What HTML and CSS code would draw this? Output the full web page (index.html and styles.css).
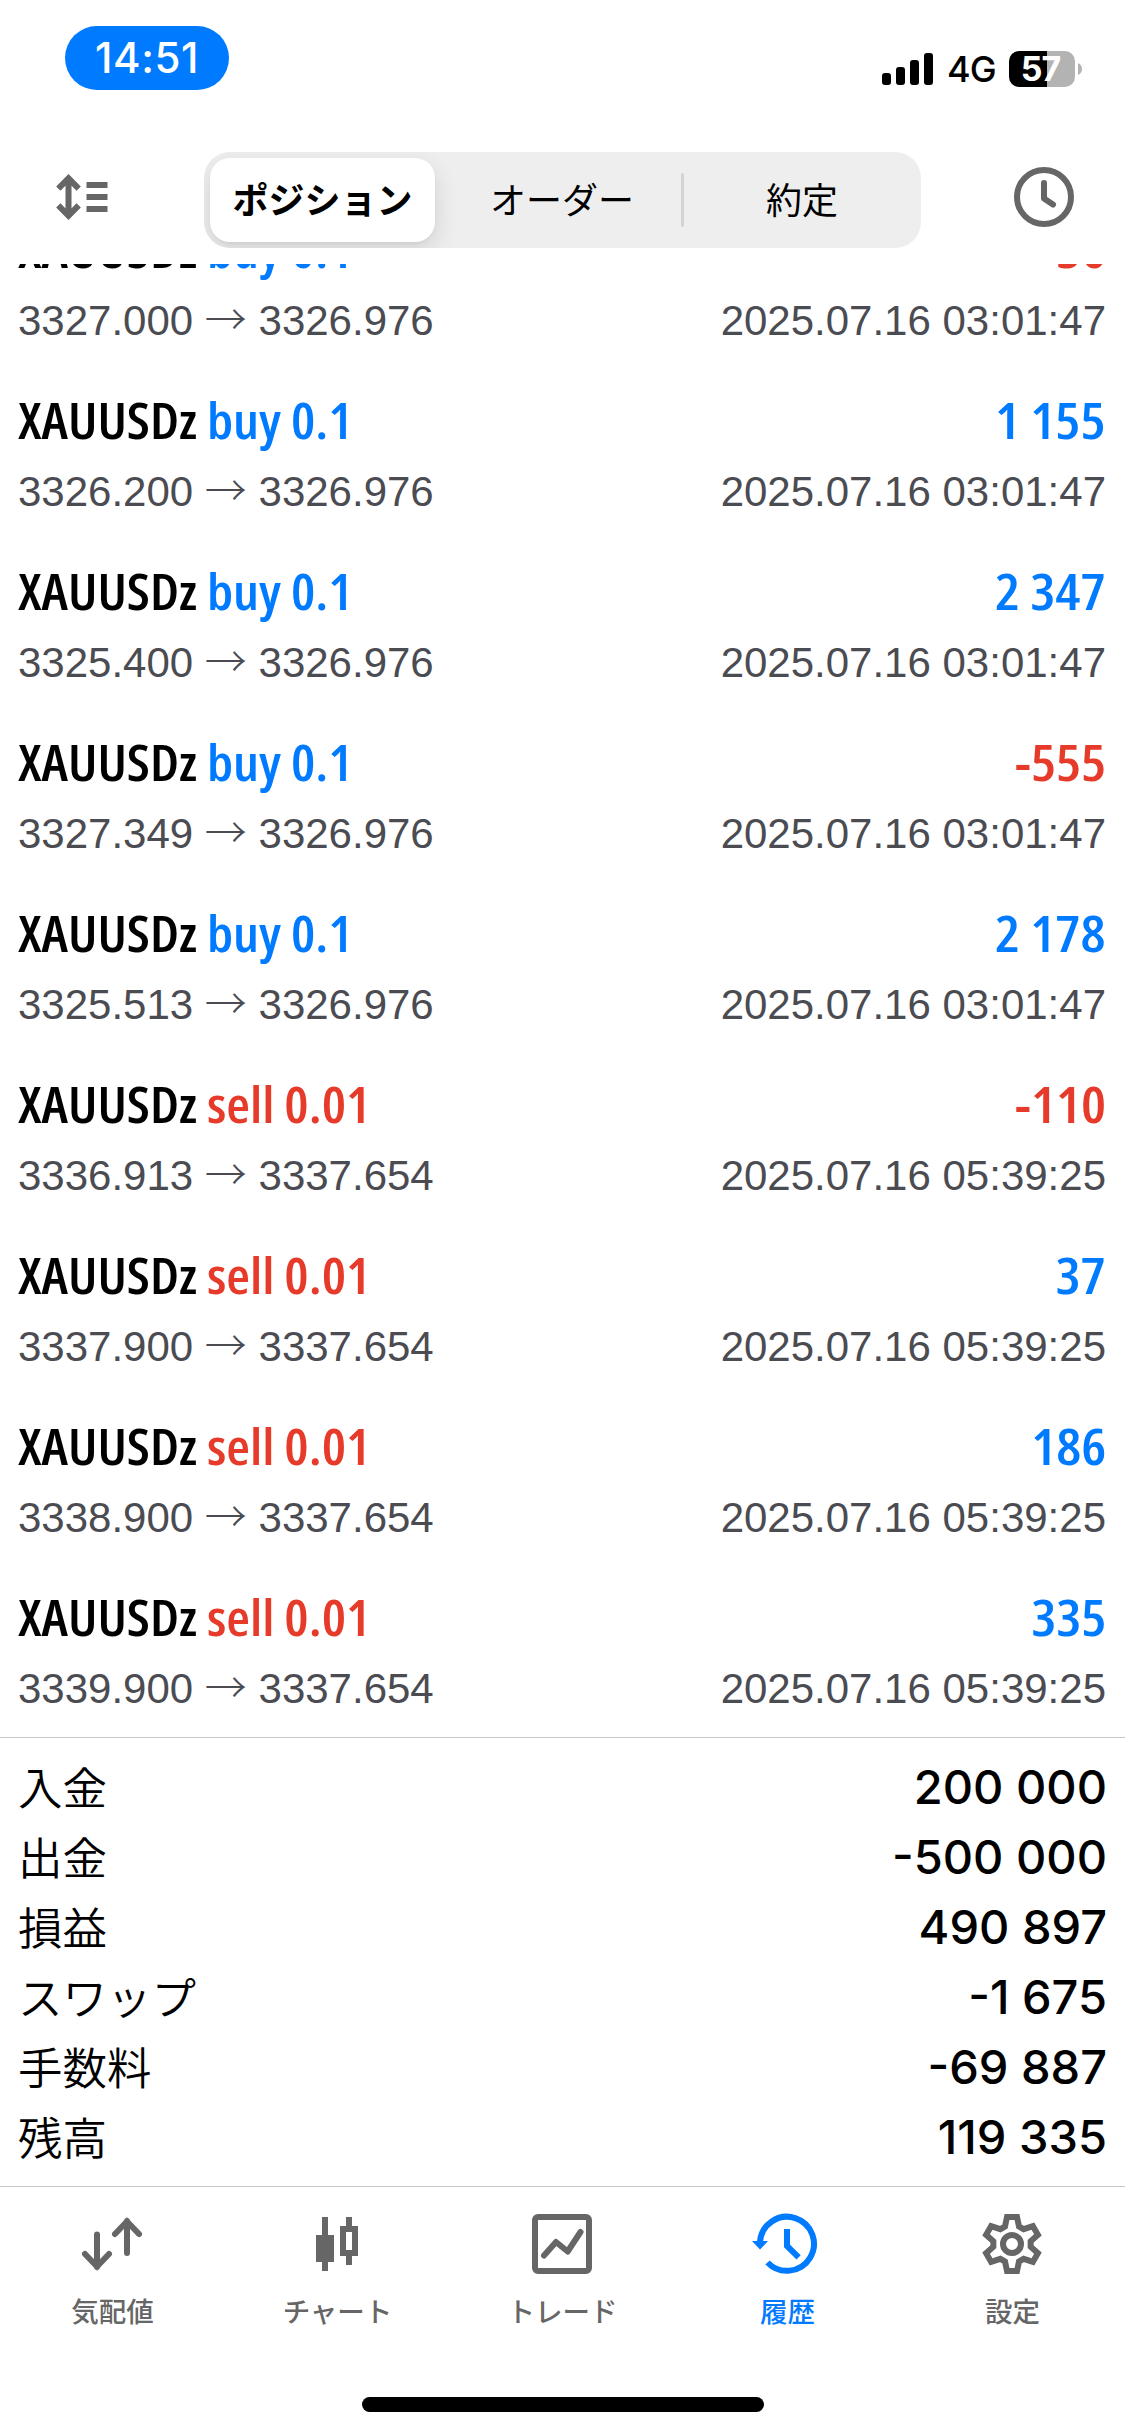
FILE: index.html
```html
<!DOCTYPE html>
<html lang="ja">
<head>
<meta charset="utf-8">
<title>履歴</title>
<link rel="stylesheet" href="styles.css">
</head>
<body>
<div class="screen">
  <div class="status">
    <div class="clock">14:51</div>
    <div class="status-right">
      <svg class="signal" width="51" height="34" viewBox="0 0 51 34"><rect x="0" y="21" width="9" height="12" rx="3"/><rect x="14" y="15" width="9" height="18" rx="3"/><rect x="28" y="8" width="9" height="25" rx="3"/><rect x="42" y="1" width="9" height="32" rx="3"/></svg>
      <span class="network">4G</span>
      <div class="battery">57</div>
      <svg class="nub" width="4" height="12" viewBox="0 0 4 12"><path d="M0 0Q4 2 4 6T0 12Z" fill="#b3b3b3"/></svg>
    </div>
  </div>
  <header class="header">
    <svg class="sort" width="52" height="46" viewBox="0 0 52 46" fill="none" stroke="#666" stroke-width="6"><path d="M12.5 4V42M2.300 14.700L12.500 4.300L22.700 14.700M2.300 31.300L12.500 41.700L22.700 31.300M30.500 11H51.500M30.500 23H51.500M30.500 35H51.500"/></svg>
    <div class="segments">
      <div class="segment selected">ポジション</div>
      <div class="segment middle">オーダー</div>
      <div class="divider"></div>
      <div class="segment last">約定</div>
    </div>
    <svg class="period" width="60" height="60" viewBox="0 0 60 60" fill="none" stroke="#666" stroke-width="6" stroke-linecap="round" stroke-linejoin="round"><circle cx="30" cy="30" r="27"/><path d="M30 16V31.500L39 37.500"/></svg>
  </header>
  <main class="deals">
    <div class="deal"><div class="line top"><span class="name">XAUUSDz <b class="buy">buy 0.1</b></span><span class="amount loss">-36</span></div><div class="line sub"><span>3327.000 <i>→</i> 3326.976</span><span>2025.07.16 03:01:47</span></div></div>
    <div class="deal"><div class="line top"><span class="name">XAUUSDz <b class="buy">buy 0.1</b></span><span class="amount gain">1 155</span></div><div class="line sub"><span>3326.200 <i>→</i> 3326.976</span><span>2025.07.16 03:01:47</span></div></div>
    <div class="deal"><div class="line top"><span class="name">XAUUSDz <b class="buy">buy 0.1</b></span><span class="amount gain">2 347</span></div><div class="line sub"><span>3325.400 <i>→</i> 3326.976</span><span>2025.07.16 03:01:47</span></div></div>
    <div class="deal"><div class="line top"><span class="name">XAUUSDz <b class="buy">buy 0.1</b></span><span class="amount loss">-555</span></div><div class="line sub"><span>3327.349 <i>→</i> 3326.976</span><span>2025.07.16 03:01:47</span></div></div>
    <div class="deal"><div class="line top"><span class="name">XAUUSDz <b class="buy">buy 0.1</b></span><span class="amount gain">2 178</span></div><div class="line sub"><span>3325.513 <i>→</i> 3326.976</span><span>2025.07.16 03:01:47</span></div></div>
    <div class="deal"><div class="line top"><span class="name">XAUUSDz <b class="sell">sell 0.01</b></span><span class="amount loss">-110</span></div><div class="line sub"><span>3336.913 <i>→</i> 3337.654</span><span>2025.07.16 05:39:25</span></div></div>
    <div class="deal"><div class="line top"><span class="name">XAUUSDz <b class="sell">sell 0.01</b></span><span class="amount gain">37</span></div><div class="line sub"><span>3337.900 <i>→</i> 3337.654</span><span>2025.07.16 05:39:25</span></div></div>
    <div class="deal"><div class="line top"><span class="name">XAUUSDz <b class="sell">sell 0.01</b></span><span class="amount gain">186</span></div><div class="line sub"><span>3338.900 <i>→</i> 3337.654</span><span>2025.07.16 05:39:25</span></div></div>
    <div class="deal"><div class="line top"><span class="name">XAUUSDz <b class="sell">sell 0.01</b></span><span class="amount gain">335</span></div><div class="line sub"><span>3339.900 <i>→</i> 3337.654</span><span>2025.07.16 05:39:25</span></div></div>
  </main>
  <section class="summary">
    <div class="total"><span>入金</span><span class="figure">200 000</span></div>
    <div class="total"><span>出金</span><span class="figure">-500 000</span></div>
    <div class="total"><span>損益</span><span class="figure">490 897</span></div>
    <div class="total"><span>スワップ</span><span class="figure">-1 675</span></div>
    <div class="total"><span>手数料</span><span class="figure">-69 887</span></div>
    <div class="total"><span>残高</span><span class="figure">119 335</span></div>
  </section>
  <nav class="tabs">
    <div class="tab"><svg width="73" height="72" viewBox="0 0 73 72" fill="none" stroke="currentColor" stroke-width="6" stroke-linecap="round"><path d="M21 26.500V59M9 46L21 58.500L33 46M51 45V13M39 26L51 13.500L63 26"/></svg><span>気配値</span></div>
    <div class="tab"><svg width="73" height="72" viewBox="0 0 73 72" fill="currentColor"><path d="M21 9h6v18h6v27h-6v9h-6v-9h-6V27h6zM45 9h6v9h6v30h-6v9h-6v-9h-6V18h6zM45 24v18h6V24z" fill-rule="evenodd"/></svg><span>チャート</span></div>
    <div class="tab"><svg width="73" height="72" viewBox="0 0 73 72" fill="none" stroke="currentColor" stroke-width="6" stroke-linecap="round"><rect x="9" y="9" width="54" height="54" rx="3"/><path d="M18 47.500L30 34L41.700 43.500L54.500 24" stroke-linejoin="round"/></svg><span>トレード</span></div>
    <div class="tab active"><svg width="73" height="72" viewBox="0 0 73 72" fill="none" stroke="currentColor" stroke-width="6"><path d="M16.500 54.500A27 27 0 1 0 9 34M36 21V38L47.600 49.300"/><path d="M1 33H17L9 41.500Z" fill="currentColor" stroke="none"/></svg><span>履歴</span></div>
    <div class="tab"><svg width="73" height="72" viewBox="0 0 73 72" fill="none" stroke="currentColor" stroke-width="6"><path d="M29 18.500L31 9H41L43 18.500L47.650 21.200L56.900 18.200L61.900 26.800L54.650 33.300V38.700L61.900 45.200L56.900 53.800L47.650 50.800L43 53.500L41 63H31L29 53.500L24.350 50.800L15.100 53.800L10.100 45.200L17.350 38.700V33.300L10.100 26.800L15.100 18.200L24.350 21.200Z"/><circle cx="36" cy="36" r="9"/></svg><span>設定</span></div>
  </nav>
  <div class="home"></div>
</div>
</body>
</html>
```
FILE: styles.css
```css
* { box-sizing: border-box; }
body { margin: 0; background: #fff; color: #000; font-family: Inter, "Noto Sans CJK JP", sans-serif; }
.screen { width: 1125px; height: 2436px; display: flex; flex-direction: column; overflow: hidden; }
svg { display: block; flex: none; }

.status { height: 152px; display: flex; justify-content: space-between; padding: 26px 43px 0 65px; }
.clock { width: 164px; height: 64px; border-radius: 32px; background: #007aff; color: #fff; font-size: 42px; font-weight: 500; letter-spacing: .6px; line-height: 64px; text-align: center; }
.status-right { display: flex; align-items: center; height: 36px; margin-top: 25px; }
.network { width: 48px; margin-left: 14px; font-size: 36px; font-weight: 450; letter-spacing: -1px; line-height: 38px; }
.battery { width: 66px; height: 36px; margin: 0 3px 0 14px; padding-right: 3px; border-radius: 10px; background: linear-gradient(90deg, #000 38px, #b3b3b3 38px); color: #fff; font-size: 34px; font-weight: 700; line-height: 36px; text-align: center; letter-spacing: -1px; }

.header { height: 112px; display: flex; align-items: flex-start; padding-left: 56px; }
.sort { margin-top: 22px; }
.segments { width: 717px; height: 96px; margin-left: 96px; display: flex; align-items: center; padding: 6px; border-radius: 26px; background: #eeeeef; overflow: hidden; font-family: "Noto Sans CJK JP", sans-serif; font-size: 36px; line-height: 80px; text-align: center; }
.segment { flex: none; height: 84px; }
.selected { width: 225px; border-radius: 20px; background: #fff; font-weight: 700; box-shadow: 0 9px 24px rgba(0, 0, 0, .12), 0 2px 3px rgba(0, 0, 0, .04); }
.middle { width: 246px; padding-left: 8px; }
.divider { width: 3px; height: 54px; border-radius: 2px; background: #d4d4d5; }
.last { width: 231px; padding-left: 5px; }
.period { margin: 15px 0 0 93px; }

.deals { height: 1473px; display: flex; flex-direction: column; justify-content: flex-end; overflow: hidden; padding: 0 19px 0 18px; }
.deal { flex: none; height: 171px; }
.line { display: flex; justify-content: space-between; white-space: nowrap; }
.top { height: 73px; padding-top: 15px; font: 600 51px/70px "Open Sans", sans-serif; font-stretch: 75%; }
.top b { font-weight: 600; }
/* widen the condensed face a little */
.name { transform: scaleX(1.068); transform-origin: left; }
.amount { transform: scaleX(1.1); transform-origin: right; }
.buy, .gain { color: #007aff; }
.sell, .loss { color: #e63b2a; }
.sub { height: 48px; margin-top: 16px; padding-top: 10px; color: #4b4b52; font: 42px/48px "Liberation Sans", sans-serif; }
.sub i { font-style: normal; font-weight: 300; font-family: "Noto Sans CJK JP", sans-serif; line-height: 0; }

.summary { height: 449px; border-top: 1px solid #c8c8c9; padding: 14px 18px 0 18px; }
.total { height: 70px; display: flex; justify-content: space-between; font: 350 44.5px/67px "Noto Sans CJK JP", sans-serif; }
.figure { font: 500 47px/70px Inter, sans-serif; }

.tabs { height: 211px; display: flex; border-top: 1px solid #c8c8c9; }
.tab { width: 225px; display: flex; flex-direction: column; align-items: center; padding-top: 21px; color: #666; font: 500 27.5px/40px "Noto Sans CJK JP", sans-serif; }
.tab span { margin-top: 10px; }
.active { color: #007aff; }
.home { width: 402px; height: 15px; margin-left: 362px; border-radius: 8px; background: #000; }
```
